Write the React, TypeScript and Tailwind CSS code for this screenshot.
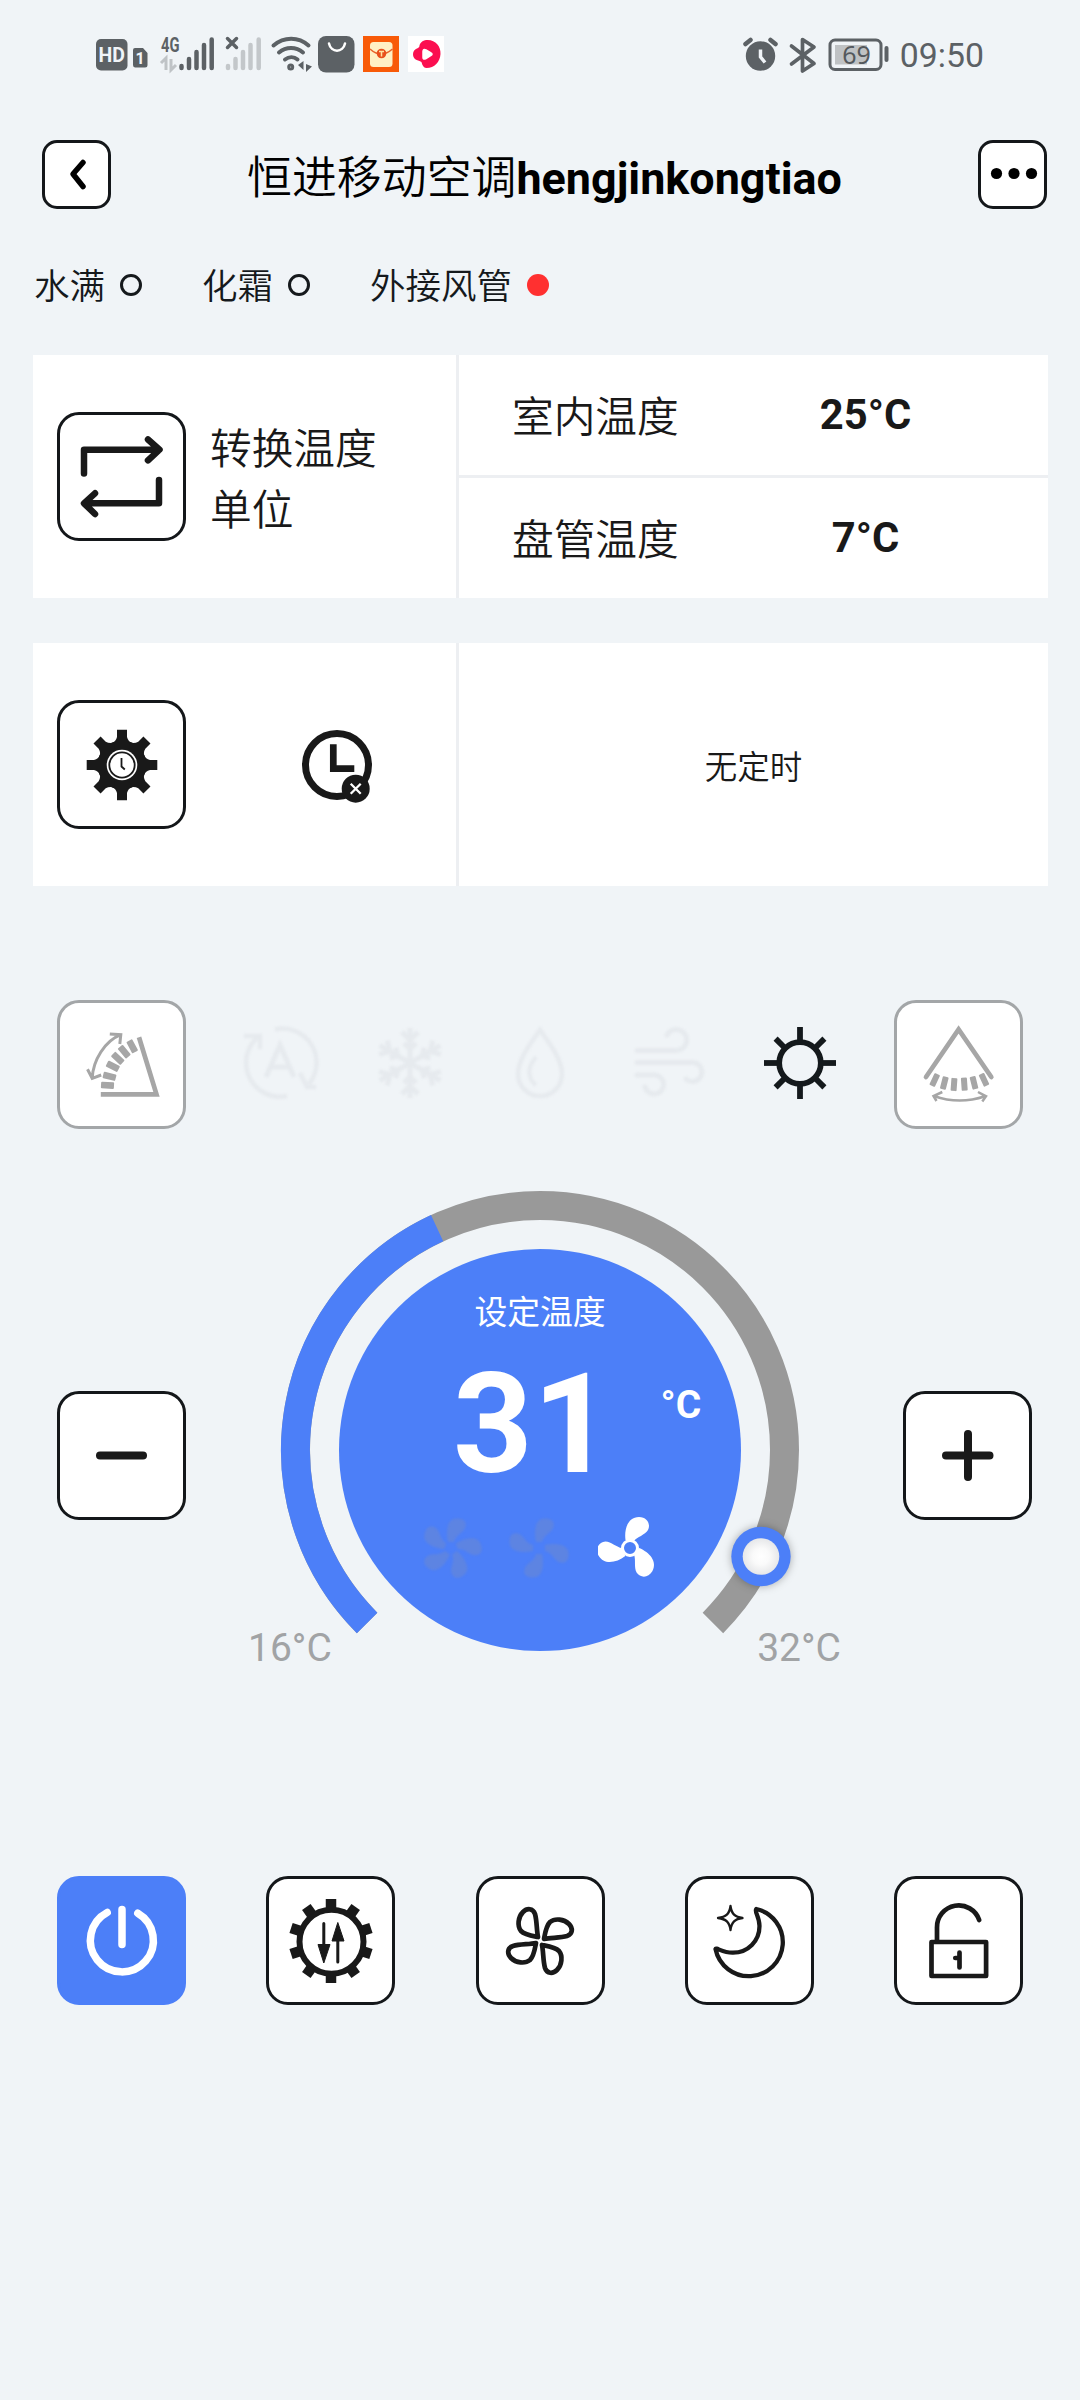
import clsx from "clsx";
import type { ReactNode } from "react";

interface IconProps {
    size?: number;
    className?: string;
    children: ReactNode;
}

// All icons are drawn around the origin so they stay centred in their button
function Icon({ size = 90, className, children }: IconProps) {
    return (
        <svg
            width={size}
            height={size}
            viewBox={`${-size / 2} ${-size / 2} ${size} ${size}`}
            fill="none"
            stroke="currentColor"
            className={clsx("shrink-0", className)}
        >
            {children}
        </svg>
    );
}

interface TileProps {
    variant?: "default" | "muted" | "active";
    className?: string;
    label: string;
    children: ReactNode;
}

function Tile({ variant = "default", className, label, children }: TileProps) {
    return (
        <button
            aria-label={label}
            className={clsx(
                "flex h-[129px] w-[129px] shrink-0 items-center justify-center rounded-[22px] border-[3px]",
                variant === "default" && "border-[#14171a] bg-white text-[#191919]",
                variant === "muted" && "border-[#a3a6a8] bg-white text-[#a6a6a6]",
                variant === "active" && "border-[#4c7ff8] bg-[#4c7ff8] text-white",
                className
            )}
        >
            {children}
        </button>
    );
}

function StatusBar() {
    return (
        <div className="flex h-[108px] items-center justify-between pl-[96px] pr-[96px] text-[#5c6165]">
            <svg width="352" height="40" viewBox="96 34 352 40" fill="none">
                <rect x="96" y="39" width="31.500" height="31.500" rx="5" fill="currentColor" />
                <text x="111.700" y="61.500" textAnchor="middle" className="fill-[#f0f4f8] font-['Roboto'] text-[19.500px] font-bold">HD</text>
                <path d="M135 48h8l4.500 5v12a2.500 2.500 0 0 1-2.500 2.500h-10a2.500 2.500 0 0 1-2-2.500V50a2 2 0 0 1 2-2z" fill="currentColor" />
                <text x="140" y="64" textAnchor="middle" className="fill-[#f0f4f8] font-['Roboto'] text-[16px] font-bold">1</text>
                <text x="161" y="52" textLength="18.500" lengthAdjust="spacingAndGlyphs" className="fill-[#5c6165] font-['Roboto'] text-[20px] font-bold">4G</text>
                <path d="M161 63l5-5v12M171 59v11l5-5" stroke="#bfc3c6" strokeWidth="3" />
                <g stroke="currentColor" strokeWidth="4.500" strokeLinecap="round">
                    <path d="M181.500 66v2M189 59v9M196.500 52v16M204 45v23M211.700 39.500v28.500" />
                    <path d="M227.500 38.500l9 9M236.500 38.500l-9 9" strokeWidth="3.500" />
                </g>
                <path d="M228 66v2M235.500 59v9M243 52v16M250.500 45v23M258.700 39.500v28.500" stroke="#c3c7ca" strokeWidth="4.500" strokeLinecap="round" />
                <g stroke="currentColor" strokeWidth="4" strokeLinecap="round">
                    <path d="M273.500 45.500c10.500-9 25-9 35 0M279 52.500c7-6 17-6 24 0M285 59.500c4-3 9-3 12.500 0" />
                    <circle cx="290.700" cy="67" r="1.500" />
                </g>
                <path d="M303.500 61v9l-5.500-5zM306 64v8l6-5.500z" fill="currentColor" />
                <rect x="318" y="36" width="36.500" height="36.500" rx="8" fill="currentColor" />
                <path d="M329 43.500c2 9.500 14 9.500 16 0" stroke="#fff" strokeWidth="2.500" strokeLinecap="round" />
                <rect x="363" y="36" width="36" height="36" fill="#f85a08" />
                <rect x="370" y="42" width="22.500" height="25" rx="3.500" fill="#fff0c4" />
                <path d="M370 49q11 10 22.500 0" stroke="#e8622a" strokeWidth="1.500" />
                <circle cx="381.500" cy="53.500" r="4.800" fill="#e8501c" />
                <path d="M379 51.500h5M381.500 51.500v5" stroke="#ffe2a0" strokeWidth="1.500" />
                <rect x="408" y="36" width="36" height="36" fill="#fff" />
                <path d="M426 40c9-1 15 6 14.500 14c-.5 8-6 14-14 14c-2 0-3-1-4-3c-1-2 0-3-3-4c-4-1-6.500-3-6.500-7c0-3 2-5 5-6c2-1 1-2 2-4q2-3.500 6-4z" fill="#fb0f50" />
                <path d="M423 51.500q0-3 3-1.500l5 3q2 1 0 2.500l-5 3q-3 1.500-3-1z" fill="#fff" stroke="#fff" strokeWidth="1.500" />
            </svg>
            <div className="flex items-center">
                <svg width="147" height="40" viewBox="742 34 147 40" fill="none" stroke="currentColor">
                    <circle cx="760.500" cy="56" r="14.700" fill="currentColor" stroke="none" />
                    <path d="M745.500 44l5-4M770.500 40l5 4" strokeWidth="4.500" strokeLinecap="round" />
                    <path d="M760.500 49.500v7.500l4.500 5.500" stroke="#f0f4f8" strokeWidth="3.500" />
                    <path d="M791.500 46l22.500 17.500l-11.500 7.500v-31.500l11.500 7.500l-22.500 17" strokeWidth="3.700" strokeLinecap="round" strokeLinejoin="round" />
                    <rect x="830" y="40" width="51" height="29.500" rx="5" strokeWidth="3" />
                    <rect x="835" y="45" width="32" height="19.500" fill="#bfc2c4" stroke="none" />
                    <path d="M886.500 48v12" strokeWidth="4" strokeLinecap="round" />
                    <text x="856.500" y="63.500" textAnchor="middle" stroke="none" className="fill-[#54595d] font-['Noto_Sans'] text-[25px]">69</text>
                </svg>
                <span className="ml-[11px] pt-[3px] font-['Roboto'] text-[33.800px] leading-none">09:50</span>
            </div>
        </div>
    );
}

function Header() {
    const button = "flex h-[69px] w-[69px] items-center justify-center rounded-[15px] border-[3px] border-[#14171a] bg-white text-black";
    return (
        <header className="mt-8 flex h-[69px] items-center justify-between pl-[42px] pr-[33px]">
            <button aria-label="返回" className={button}>
                <Icon size={40}>
                    <path d="M6 -12.500L-4 -1L6 11.500" strokeWidth="5.500" strokeLinecap="round" strokeLinejoin="round" />
                </Icon>
            </button>
            <h1 className="flex items-baseline pt-[9px] text-[44.900px] leading-none text-black">
                <span className="font-[350]">恒进移动空调</span>
                <span className="font-bold">hengjinkongtiao</span>
            </h1>
            <button aria-label="更多" className={button}>
                <Icon size={56}>
                    <g fill="currentColor" stroke="none">
                        <circle cx="-16.500" cy="-1.500" r="5.600" />
                        <circle cx="1" cy="-1.500" r="5.600" />
                        <circle cx="18.500" cy="-1.500" r="5.600" />
                    </g>
                </Icon>
            </button>
        </header>
    );
}

const indicators = [
    { name: "水满", on: false },
    { name: "化霜", on: false },
    { name: "外接风管", on: true },
];

function Indicators() {
    return (
        <div className="mt-[52px] flex h-12 items-center gap-[60px] pl-[34px]">
            {indicators.map((item) => (
                <div key={item.name} className="flex items-center gap-[15px] text-[35.500px] leading-none text-[#15191c]">
                    <span className="pt-[5px] font-[350]">{item.name}</span>
                    <span
                        className={clsx(
                            "h-[22px] w-[22px] rounded-full",
                            item.on ? "bg-[#ff3030]" : "border-[3px] border-[#15191c]"
                        )}
                    />
                </div>
            ))}
        </div>
    );
}

function Reading({ name, value }: { name: string; value: string }) {
    return (
        <div className="flex flex-1 items-center bg-white pl-[53px]">
            <span className="w-[240px] pt-[5px] text-[41.700px] leading-none font-[350]">{name}</span>
            <span className="w-[227px] text-center text-[41.700px] leading-none font-bold">{value}</span>
        </div>
    );
}

function InfoCards() {
    return (
        <div className="mt-[46px] flex flex-col gap-[45px] pl-[33px] pr-8 text-[#191919]">
            <div className="flex h-[243px] gap-[3px] bg-[#edeff2]">
                <div className="flex w-[423px] items-center bg-white pl-6">
                    <Tile label="转换温度单位">
                        <Icon>
                            <g strokeWidth="6.500" strokeLinecap="round" strokeLinejoin="round">
                                <path d="M-38 -3.500V-27.300H37M26 -37.500L37.500 -27.300L26 -16.700" />
                                <path d="M37 3V26.300H-37M-27 16.300L-38 26.300L-27 37" />
                            </g>
                        </Icon>
                    </Tile>
                    <p className="ml-6 w-[170px] pt-[6px] text-[41.700px] leading-[61px] font-[350]">转换温度单位</p>
                </div>
                <div className="flex flex-1 flex-col gap-[3px]">
                    <Reading name="室内温度" value="25°C" />
                    <Reading name="盘管温度" value="7°C" />
                </div>
            </div>
            <div className="flex h-[243px] gap-[3px] bg-[#edeff2]">
                <div className="flex w-[423px] items-center bg-white pl-6">
                    <Tile label="定时设置">
                        <Icon>
                            <g fill="currentColor" stroke="none">
                                <circle r="24.500" />
                                {[0, 45, 90, 135, 180, 225, 270, 315].map((angle) => (
                                    <path
                                        key={angle}
                                        d="M-5 -35.300H5V-28Q6 -23.500 11 -21L0 -10L-11 -21Q-6 -23.500 -5 -28Z"
                                        transform={`rotate(${angle})`}
                                    />
                                ))}
                                <circle r="15.300" fill="#fff" />
                            </g>
                            <circle r="12.700" strokeWidth="1.800" />
                            <path d="M-0.500 -7V1.500L2.800 4.500" strokeWidth="1.800" />
                        </Icon>
                    </Tile>
                    <Icon className="ml-[106px]">
                        <circle r="31.500" strokeWidth="7" />
                        <path d="M-3.700 -20.700V3.700H17.300" strokeWidth="6.700" />
                        <circle cx="18.700" cy="23.700" r="14" fill="currentColor" stroke="none" />
                        <path d="M13.700 18.700l10 10M23.700 18.700l-10 10" stroke="#fff" strokeWidth="2.300" />
                    </Icon>
                </div>
                <div className="flex flex-1 items-center justify-center bg-white pt-[7px] text-[32.500px] font-[350]">
                    无定时
                </div>
            </div>
        </div>
    );
}

const verticalSlats = [
    [-14.5, 20.3, 3],
    [-12.5, 11.3, 14],
    [-9.2, 1.3, 27],
    [-4.2, -6.7, 43],
    [2.2, -13.3, 50],
    [10.2, -18.7, 62],
];

const horizontalSlats = [
    [-24.3, 15, 25],
    [-14.7, 18, 14],
    [-5, 19.5, 4],
    [5.3, 19.2, -4],
    [15, 17.8, -14],
    [25, 14.8, -25],
];

function ModeRow() {
    return (
        <div className="mt-[114px] flex items-center pl-[57px]">
            <Tile variant="muted" label="上下摆风">
                <Icon>
                    <path d="M-21.200 29.300H34.500L17 -27.700" strokeWidth="4.700" />
                    <g fill="currentColor" stroke="none">
                        {verticalSlats.map(([x, y, angle]) => (
                            <rect key={angle} x="-6.500" y="-3.300" width="13" height="6.600" rx="1" transform={`translate(${x} ${y}) rotate(${angle})`} />
                        ))}
                    </g>
                    <path d="M-29.800 13.300C-29 -5 -17 -24 -1.200 -30.300M-12.200 -31L-1.200 -30.300L-2.200 -21M-34.500 4.300L-29.800 13.300L-20.800 10" strokeWidth="3" />
                </Icon>
            </Tile>
            <div className="ml-[49px] flex gap-10 pb-[3px] text-[#e6eaee]">
                <Icon className="blur-[1px]">
                    <g strokeWidth="4.500">
                        <path d="M-5 -33.500A34 34 0 0 1 29 21M20 10L27 24H36" />
                        <path d="M7 33A34 34 0 0 1 -21 -27M-36 -27H-20V-14" />
                        <path d="M-14 14L0 -18L14 14M-8 4H8" strokeWidth="5" />
                    </g>
                </Icon>
                <Icon className="blur-[1px]">
                    {[0, 60, 120, 180, 240, 300].map((angle) => (
                        <path key={angle} d="M0 0V-35M-8 -31L0 -23L8 -31M-6 -20L0 -14L6 -20" strokeWidth="5" transform={`rotate(${angle})`} />
                    ))}
                </Icon>
                <Icon className="blur-[1px]">
                    <path d="M0 -33C-9 -20 -22 -4 -22 11A22 22 0 0 0 22 11C22 -4 9 -20 0 -33Z" strokeWidth="4.500" />
                    <path d="M-4 -6C-9 0 -12 7 -10 13C-9 17 -7 20 -4 22" strokeWidth="4" />
                </Icon>
                <Icon className="blur-[1px]">
                    <g strokeWidth="5" strokeLinecap="round">
                        <path d="M-33 -12.500H6A10.500 10.500 0 1 0 -3 -28" />
                        <path d="M-33 -0.500H23A9.500 9.500 0 1 1 16 16" />
                        <path d="M-33 12H-15A9.500 9.500 0 1 1 -25 24" />
                    </g>
                </Icon>
                <Icon className="text-[#14191c]">
                    <circle r="20.800" strokeWidth="5.700" />
                    {[0, 45, 90, 135, 180, 225, 270, 315].map((angle) => (
                        <path key={angle} d={angle % 90 ? "M0 -22V-34.500" : "M0 -22V-36"} strokeWidth="5.800" transform={`rotate(${angle})`} />
                    ))}
                </Icon>
            </div>
            <Tile variant="muted" label="左右摆风" className="ml-[49px]">
                <Icon>
                    <path d="M-33 12L-0.400 -35.500L32.300 12" strokeWidth="4.700" strokeLinecap="round" />
                    <g fill="currentColor" stroke="none">
                        {horizontalSlats.map(([x, y, angle]) => (
                            <rect key={angle} x="-3" y="-6.500" width="6" height="13" rx="1" transform={`translate(${x} ${y}) rotate(${angle})`} />
                        ))}
                    </g>
                    <path d="M-25 31Q0 40 26 31.300M-16.700 27L-25.500 31L-22.500 36M19 27L27 31.300L23.300 36.500" strokeWidth="2.500" />
                </Icon>
            </Tile>
        </div>
    );
}

interface FanProps {
    blades: number;
    className: string;
}

function Fan({ blades, className }: FanProps) {
    const angles = Array.from({ length: blades }, (_, i) => (i * 360) / blades);
    return (
        <Icon size={64} className={className}>
            <g fill="currentColor" stroke="none">
                {angles.map((angle) => (
                    <path
                        key={angle}
                        d={
                            blades === 3
                                ? "M-4.500 -8C-6 -19 -2 -31 9 -31C17 -31 21 -24 18 -18C15 -13 7 -11 4 -7Z"
                                : "M-3 -6C-5 -14 -5 -29 5 -29.500C12 -30 16 -27 14.500 -21C13 -15 5 -14 3 -6Z"
                        }
                        transform={`rotate(${angle})`}
                    />
                ))}
            </g>
            {blades === 3 && <circle r="7.500" fill="#4c7ff8" strokeWidth="3" />}
        </Icon>
    );
}

function Dial() {
    return (
        <div className="relative ml-[54px] h-[500px] w-[600px] shrink-0">
            <svg width="600" height="500" viewBox="-300 -270 600 500" fill="none">
                <defs>
                    <radialGradient id="knob">
                        <stop offset="0" stopColor="#ffffff" />
                        <stop offset="0.450" stopColor="#fafafa" />
                        <stop offset="1" stopColor="#e6e7e9" />
                    </radialGradient>
                </defs>
                <circle r="201" fill="#4c7ff8" />
                <path d="M-172.900 172.900A244.500 244.500 0 1 1 172.900 172.900" stroke="#999999" strokeWidth="29" />
                <path d="M-172.900 172.900A244.500 244.500 0 0 1 -102.900 -221.800" stroke="#4c7ff8" strokeWidth="29" />
                <g className="drop-shadow-[0_0_4px_rgba(0,0,0,0.3)]">
                    <circle cx="221" cy="106.500" r="29.700" fill="#4c7ff8" />
                </g>
                <circle cx="221" cy="106.500" r="18.300" fill="url(#knob)" />
            </svg>
            <div className="absolute inset-0 flex flex-col items-center pt-[117px] leading-none text-white">
                <span className="text-[32.800px]">设定温度</span>
                <div className="mt-[25px] flex w-full items-start pl-[213px]">
                    <span className="text-[139px] font-bold">31</span>
                    <span className="ml-[48px] mt-[31px] text-[39px] font-bold">°C</span>
                </div>
                <div className="mt-[22px] flex gap-[24px]">
                    <Fan blades={5} className="text-[#5d84e2] blur-[1px]" />
                    <Fan blades={4} className="text-[#5d84e2] blur-[1px]" />
                    <Fan blades={3} className="ml-[3px] text-white" />
                </div>
            </div>
            <div className="absolute bottom-[12px] left-[8px] flex w-[593px] justify-between text-[39px] leading-none text-[#a1a3a5]">
                <span>16°C</span>
                <span>32°C</span>
            </div>
        </div>
    );
}

function TemperatureControl() {
    return (
        <div className="mt-[51px] flex h-[500px] pl-[57px]">
            <Tile label="降低" className="mt-[211px]">
                <Icon>
                    <path d="M-22 -0.500H21" strokeWidth="8" strokeLinecap="round" />
                </Icon>
            </Tile>
            <Dial />
            <Tile label="升高" className="ml-[63px] mt-[211px]">
                <Icon>
                    <path d="M-22 -0.500H21.500M0 -22V21" strokeWidth="8" strokeLinecap="round" />
                </Icon>
            </Tile>
        </div>
    );
}

function BottomBar() {
    return (
        <div className="mt-[196px] flex justify-between px-[57px]">
            <Tile variant="active" label="开关">
                <Icon>
                    <path d="M-14.800 -28.500A31.500 31.500 0 1 0 15.800 -27.800M0 -31.500V3.500" strokeWidth="7.500" strokeLinecap="round" />
                </Icon>
            </Tile>
            <Tile label="模式">
                <Icon>
                    <circle cx="0.500" cy="0.700" r="32" strokeWidth="6" />
                    {Array.from({ length: 10 }, (_, i) => (
                        <path key={i} d="M0 -33V-42" strokeWidth="10.500" transform={`rotate(${i * 36})`} />
                    ))}
                    <path d="M-7.200 -17.500V5M6.800 21V-2" strokeWidth="3" strokeLinecap="round" />
                    <path d="M-13 3.500H-1L-7.200 22ZM1 0H13L6.800 -18.500Z" fill="currentColor" strokeWidth="1" strokeLinejoin="round" />
                </Icon>
            </Tile>
            <Tile label="风速">
                <Icon>
                    {[0, 90, 180, 270].map((angle) => (
                        <path
                            key={angle}
                            d="M-2 -4C-3.500 -11 -3 -20 -5 -27C-7 -33 -13 -33 -17 -29C-22 -24 -23 -15 -19 -10C-15 -6 -7 -5 -2 -4Z"
                            strokeWidth="4.700"
                            strokeLinejoin="round"
                            transform={`rotate(${angle})`}
                        />
                    ))}
                </Icon>
            </Tile>
            <Tile label="睡眠">
                <Icon>
                    <path d="M7.200 -32A34 34 0 1 1 -33.500 8C-33 6 -26 12 -16 11.700C-1 11.500 10.500 0 10.500 -15C10.500 -24 5 -30 7.200 -32Z" strokeWidth="4.300" strokeLinejoin="round" />
                    <path d="M-18.500 -35C-17.500 -27 -14 -24 -6.500 -23C-14 -22 -17.500 -19 -18.500 -11C-19.500 -19 -23 -22 -31 -23C-23 -24 -19.500 -27 -18.500 -35Z" strokeWidth="2.300" strokeLinejoin="round" />
                </Icon>
            </Tile>
            <Tile label="童锁">
                <Icon>
                    <rect x="-27.500" y="1" width="54.600" height="34" strokeWidth="4.700" strokeLinejoin="round" />
                    <path d="M-22 0V-13.500A21.700 21.700 0 0 1 20.200 -21" strokeWidth="4.700" strokeLinecap="round" />
                    <path d="M0.500 11.500V26.500M-3.700 17H0" strokeWidth="4.700" strokeLinecap="round" />
                </Icon>
            </Tile>
        </div>
    );
}

export default function App() {
    return (
        <div className="h-[2400px] w-[1080px] overflow-hidden bg-[#f0f4f7] font-['Roboto','Noto_Sans_CJK_SC',sans-serif]">
            <StatusBar />
            <Header />
            <Indicators />
            <InfoCards />
            <ModeRow />
            <TemperatureControl />
            <BottomBar />
        </div>
    );
}
